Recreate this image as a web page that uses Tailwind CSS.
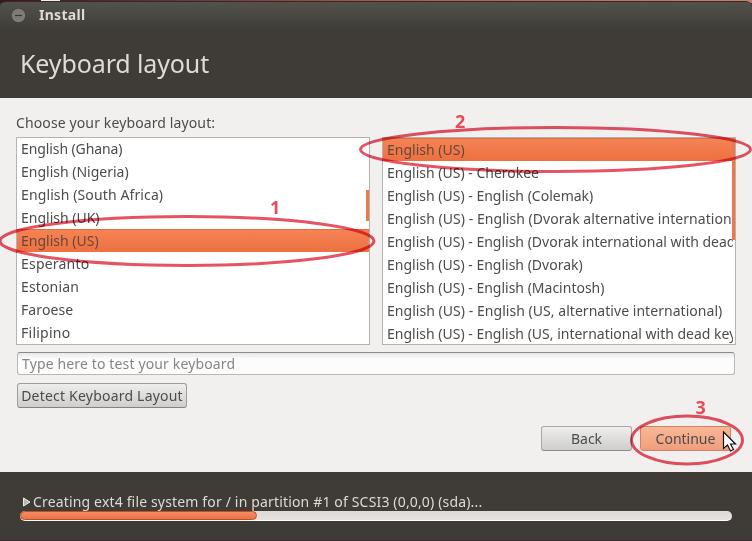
<!DOCTYPE html>
<html lang="en">
<head>
<meta charset="utf-8">
<title>Install</title>
<script src="https://cdn.jsdelivr.net/npm/@tailwindcss/browser@4"></script>
</head>
<body class="bg-[#3c3b37]">
<div class="relative flex flex-col w-[752px] h-[541px] overflow-hidden bg-[#3f3b37] font-['Noto_Sans',sans-serif] text-[14px] text-[#4c4c4c] whitespace-nowrap">
  <div class="h-[3px] shrink-0 bg-linear-to-r from-[#351824] via-[#a35b50] to-[#c98070] flex"><span class="ml-[41px] w-[19px] h-px bg-[#eee]"></span></div>
  <header class="-mt-[2px] h-[97px] shrink-0 rounded-t-[6px] border-t border-[#3b2826] bg-linear-to-b from-[#51534b] from-0% to-[#3f3b37] to-[29px]">
    <div class="flex items-center h-[27px] pl-[11px]">
      <svg class="w-[15px] h-[15px]" viewBox="0 0 15 15"><circle cx="7.5" cy="7.5" r="7.2" fill="#7d7c76" stroke="#35332f" stroke-width=".6"/><path d="M4 7.5h7" stroke="#363530" stroke-width="1.2"/></svg>
      <span class="ml-[13px] -mt-[2px] text-[14px] font-bold text-[#dfdbd2] tracking-[0.28px]">Install</span>
    </div>
    <h1 class="mt-[16px] ml-[20px] text-[25px] leading-[36px] text-[#dfdbd2] tracking-[-0.12px]">Keyboard layout</h1>
  </header>
  <main class="h-[374px] shrink-0 bg-[#f2f0ee] pl-[16px] pr-[16px]">
    <div class="h-[39px] pt-[15px] leading-[20px] tracking-[0.12px]"><span>Choose your keyboard layout:</span></div>
    <div class="flex gap-[12px] h-[208px]">
      <ul class="relative w-[354px] h-[208px] bg-white border border-[#b6b2ae] overflow-hidden leading-[23px]">
        <li class="h-[23px] -mt-px pl-[4px] tracking-[-0.1px]"><span>English (Ghana)</span></li>
        <li class="h-[23px] pl-[4px]"><span>English (Nigeria)</span></li>
        <li class="h-[23px] pl-[4px] tracking-[0.12px]"><span>English (South Africa)</span></li>
        <li class="h-[23px] pl-[4px]"><span>English (UK)</span></li>
        <li class="h-[23px] pl-[4px] bg-linear-to-b from-[#f58354] to-[#ed7040] border-t border-[#dc7045] leading-[22px] text-[#65483b]"><span>English (US)</span></li>
        <li class="h-[23px] pl-[4px] tracking-[0.2px]"><span>Esperanto</span></li>
        <li class="h-[23px] pl-[4px] tracking-[0.15px]"><span>Estonian</span></li>
        <li class="h-[23px] pl-[4px] tracking-[0.1px]"><span>Faroese</span></li>
        <li class="h-[23px] pl-[4px] tracking-[0.25px]"><span>Filipino</span></li>
        <li class="absolute right-0 top-[52px] w-[3px] h-[31px] bg-[#eb7849]"></li>
      </ul>
      <ul class="relative w-[354px] h-[208px] bg-white border border-[#b6b2ae] overflow-hidden leading-[23px]">
        <li class="h-[23px] pl-[4px] bg-linear-to-b from-[#f58354] to-[#ed7040] border-t border-[#dc7045] leading-[22px] text-[#65483b]"><span>English (US)</span></li>
        <li class="h-[23px] pl-[4px]"><span>English (US) - Cherokee</span></li>
        <li class="h-[23px] pl-[4px]"><span>English (US) - English (Colemak)</span></li>
        <li class="h-[23px] pl-[4px] w-[349px] overflow-hidden tracking-[0.04px]"><span>English (US) - English (Dvorak alternative internation</span></li>
        <li class="h-[23px] pl-[4px] w-[350px] overflow-hidden"><span>English (US) - English (Dvorak international with dead keys)</span></li>
        <li class="h-[23px] pl-[4px]"><span>English (US) - English (Dvorak)</span></li>
        <li class="h-[23px] pl-[4px]"><span>English (US) - English (Macintosh)</span></li>
        <li class="h-[23px] pl-[4px] tracking-[0.04px]"><span>English (US) - English (US, alternative international)</span></li>
        <li class="h-[23px] pl-[4px] w-[350px] overflow-hidden"><span>English (US) - English (US, international with dead keys)</span></li>
        <li class="absolute right-0 top-0 w-[3px] h-[102px] bg-[#eb7849]"></li>
      </ul>
    </div>
    <div class="mt-[7px] ml-px w-[718px] h-[23px] rounded-[3px] border border-[#bbb7b4] border-t-[#8c8986] bg-linear-to-b from-[#e9e8e8] to-[#fcfcfc] to-[6px] pl-[4px] leading-[21px] text-[#868686] tracking-[0.14px]"><span>Type here to test your keyboard</span></div>
    <button class="block mt-[8px] ml-px w-[170px] h-[25px] rounded-[3px] border border-[#a09d9a] border-b-[#858280] bg-linear-to-b from-[#eeeeed] to-[#cfcecd] leading-[22px] text-center tracking-[0.21px]"><span>Detect Keyboard Layout</span></button>
    <div class="flex justify-end gap-[8px] mt-[18px] pr-[5px]">
      <button class="w-[91px] h-[25px] rounded-[3px] border border-[#aaa7a4] border-b-[#8f8c8a] bg-linear-to-b from-[#eeeeed] to-[#cfcecd] leading-[22px]"><span>Back</span></button>
      <button class="w-[91px] h-[25px] rounded-[3px] border border-[#cd8264] bg-linear-to-b from-[#f9b797] to-[#ef9e7c] leading-[22px]"><span>Continue</span></button>
    </div>
  </main>
  <footer class="pt-[20px] pl-[20px] pr-[20px]">
    <div class="flex items-center h-[20px] text-[#dfdbd2]">
      <svg class="w-[10px] h-[10px] -mt-px ml-[2px] mr-px" viewBox="0 0 10 10"><path d="M1.500 1v8L8 5z" fill="#b9b6b1" stroke="#eeeae5"/></svg>
      <span class="-mt-[2px] tracking-[0.16px]">Creating ext4 file system for / in partition #1 of SCSI3 (0,0,0) (sda)...</span>
    </div>
    <div class="-mt-px h-[10px] rounded-full bg-linear-to-b from-[#dedad6] to-[#e6e2df] border-b border-white">
      <div class="w-[237px] h-[9px] rounded-full bg-linear-to-b from-[#f58b60] to-[#ed7447] border border-[#bb4f27]"></div>
    </div>
  </footer>
  <div class="absolute bottom-0 left-0 w-full h-px bg-[#372c2d]"></div>
  <svg class="absolute inset-0 w-[752px] h-[541px] mix-blend-multiply" viewBox="0 0 752 541" fill="none">
    <g stroke="#e65363" stroke-width="3">
      <ellipse cx="187" cy="241" rx="187" ry="24.500"/>
      <ellipse cx="555.500" cy="149.500" rx="195" ry="22"/>
      <ellipse cx="687" cy="440" rx="55.500" ry="24"/>
    </g>
  </svg>
  <svg class="absolute inset-0 w-[752px] h-[541px]" viewBox="0 0 752 541" fill="none">
    <g fill="#e64c58" font-family="Noto Sans" font-weight="700" font-size="18">
      <text x="270" y="214">1</text><text x="455" y="128">2</text><text x="695.500" y="414">3</text>
    </g>
    <path d="M723.500 432v16.500l4-3.500 3 6 3-1.500-3-5.500h5z" fill="#fff" stroke="#111" stroke-width="1.200"/>
  </svg>
</div>
</body>
</html>
